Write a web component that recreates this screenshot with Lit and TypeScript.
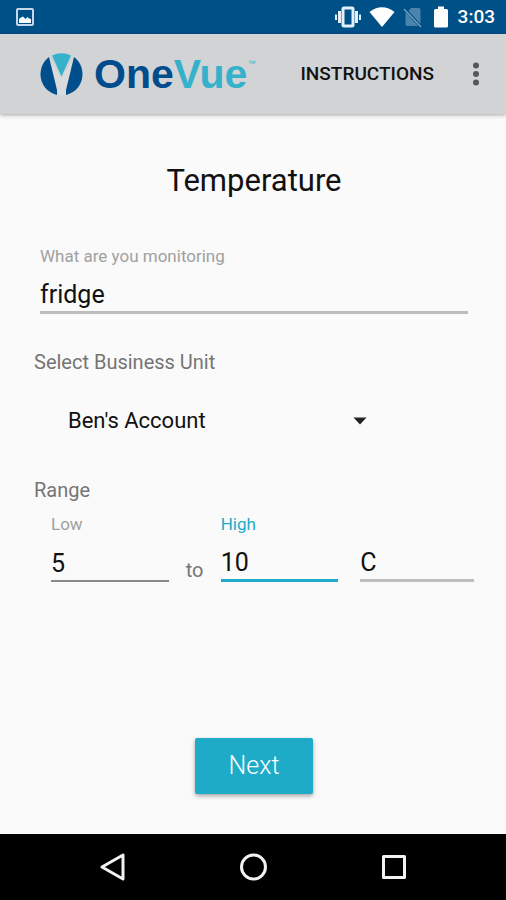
import { LitElement, html, css } from "lit";
import { customElement, state } from "lit/decorators.js";

@customElement("status-bar")
class StatusBar extends LitElement {
  static styles = css`
    :host {
      display: flex;
      align-items: center;
      justify-content: space-between;
      height: 34px;
      padding: 0 11px 0 16px;
      background: #005088;
      color: #fff;
      font: 500 19px/34px Roboto, sans-serif;
    }
    .group {
      display: flex;
      align-items: center;
    }
    svg {
      display: block;
    }
    .wifi {
      margin-left: 7px;
    }
    .sim {
      margin-left: 8px;
    }
    .battery {
      margin-left: 11px;
    }
    .time {
      margin-left: 10px;
    }
  `;
  render() {
    return html`
      <svg width="18" height="18" viewBox="0 0 18 18" role="img" aria-label="Screenshot saved">
        <rect x="1" y="1" width="16" height="16" rx="1" fill="none" stroke="#c5d8ea" stroke-width="2" />
        <path d="M3 15V11L5 9.5 7 8.5 9.5 11 11.5 9 13 10.5 15 11V15Z" fill="#fff" />
      </svg>
      <div class="group">
        <svg width="28" height="22" viewBox="0 0 28 22" role="img" aria-label="Vibrate">
          <g fill="none" stroke="#e4effa">
            <rect x="9" y="2" width="10" height="18" rx="1" stroke-width="3" />
            <path d="M5.5 5V17M22.5 5V17" stroke-width="3" />
            <path d="M2 8.500V14M26 8.500V14" stroke-width="2" />
          </g>
        </svg>
        <svg class="wifi" width="26" height="22" viewBox="0 0 26 22" role="img" aria-label="Wi-Fi">
          <path d="M0.500 6C7.500 -0.300 18.500 -0.300 25.500 6L13 21Z" fill="#fff" />
        </svg>
        <svg class="sim" width="20" height="22" viewBox="0 0 20 22" role="img" aria-label="No SIM">
          <path d="M8 2H16Q17.500 2 17.500 3.500V18L5.500 5Z M2.500 6L15 20H4Q2.500 20 2.500 18.500Z" fill="#4a83ab" />
          <path d="M1 3L18 21" stroke="#6f9dbd" stroke-width="1.500" fill="none" />
        </svg>
        <svg class="battery" width="14" height="22" viewBox="0 0 14 22" role="img" aria-label="Battery full">
          <path d="M4 0.500H10V3H12.500Q14 3 14 4.500V20Q14 21.500 12.500 21.500H1.500Q0 21.500 0 20V4.500Q0 3 1.500 3H4Z" fill="#fff" />
        </svg>
        <span class="time">3:03</span>
      </div>
    `;
  }
}

@customElement("app-header")
class AppHeader extends LitElement {
  static styles = css`
    :host {
      display: flex;
      align-items: center;
      height: 80px;
      padding: 0 18px 0 40px;
      background: #d1d3d5;
      box-shadow: 0 1px 4px rgba(0, 0, 0, 0.35);
    }
    svg {
      display: block;
    }
    .brand {
      display: flex;
      align-items: center;
      gap: 11px;
      font: 700 41px/48px "Liberation Sans", sans-serif;
      color: #004c8c;
    }
    .vue {
      color: #35b1cb;
    }
    .name {
      display: flex;
      align-items: flex-start;
    }
    .tm {
      font-size: 8px;
      line-height: 28px;
      font-weight: 400;
      color: #35b1cb;
    }
    button {
      border: 0;
      padding: 0;
      background: none;
      color: #111;
      cursor: pointer;
    }
    .instructions {
      margin-left: auto;
      font: 500 19px/40px Roboto, sans-serif;
    }
    .more {
      margin-left: 30px;
      padding: 8px 9px;
    }
  `;
  render() {
    return html`
      <div class="brand">
        <svg width="43" height="43" viewBox="0 0 43 43" aria-hidden="true">
          <path d="M9 4L21.500 25L34 4L25.500 42H17.500Z" fill="#d9dbdd" />
          <path d="M9 4C4 7.500 0.500 14 0.500 21.500C0.500 31 7 39.500 17 42V37Z" fill="#004f8c" />
          <path d="M34 4C39 7.500 42.500 14 42.500 21.500C42.500 31 36 39.500 26 42V37Z" fill="#004f8c" />
          <path d="M12 2.500Q21.500 -1.800 31 2.500L21.500 23.500Z" fill="#35b1cb" />
        </svg>
        <span class="name"><span>One<span class="vue">Vue</span></span><span class="tm">™</span></span>
      </div>
      <button class="instructions">INSTRUCTIONS</button>
      <button class="more" aria-label="More options">
        <svg width="6" height="24" viewBox="0 0 6 24" fill="#555759">
          <circle cx="3" cy="3.500" r="3" />
          <circle cx="3" cy="12" r="3" />
          <circle cx="3" cy="20.500" r="3" />
        </svg>
      </button>
    `;
  }
}

@customElement("nav-bar")
class NavBar extends LitElement {
  static styles = css`
    :host {
      display: flex;
      align-items: center;
      justify-content: center;
      gap: 97px;
      height: 66px;
      background: #000;
    }
    button {
      display: flex;
      width: 44px;
      height: 44px;
      align-items: center;
      justify-content: center;
      padding: 0;
      border: 0;
      background: none;
    }
    svg {
      fill: none;
      stroke: #f2f2f2;
      stroke-width: 3;
      stroke-linejoin: round;
    }
  `;
  render() {
    return html`
      <button aria-label="Back">
        <svg width="28" height="28" viewBox="0 0 28 28"><path d="M25 2V26L4 14Z" /></svg>
      </button>
      <button aria-label="Home">
        <svg width="28" height="28" viewBox="0 0 28 28"><circle cx="14.500" cy="14" r="12" /></svg>
      </button>
      <button aria-label="Recent apps">
        <svg width="28" height="28" viewBox="0 0 28 28"><rect x="3.500" y="3.500" width="21" height="21" /></svg>
      </button>
    `;
  }
}

@customElement("app-root")
class AppRoot extends LitElement {
  @state() private item = "fridge";
  @state() private low = "5";
  @state() private high = "10";
  @state() private unit = "C";

  static styles = css`
    :host {
      display: flex;
      flex-direction: column;
      min-height: 100vh;
      background: #fafafa;
      color: #111;
      font-family: Roboto, sans-serif;
    }
    main {
      flex: 1;
      display: flex;
      flex-direction: column;
      padding: 47px 32px 40px 34px;
    }
    h1 {
      margin: 0 0 45px;
      font-size: 31px;
      line-height: 40px;
      font-weight: 400;
      text-align: center;
    }
    .field {
      display: flex;
      flex-direction: column;
    }
    .monitor {
      margin: 0 6px 36px;
    }
    .caption {
      font-size: 17px;
      line-height: 20px;
      color: #a0a0a0;
    }
    .section {
      font-size: 20px;
      line-height: 24px;
      color: #757575;
    }
    input {
      box-sizing: border-box;
      width: 100%;
      min-width: 0;
      height: 48px;
      margin: 0;
      padding: 12px 0 0;
      border: 0;
      border-bottom: 3px solid #bdbdbd;
      border-radius: 0;
      outline: 0;
      background: none;
      color: #111;
      font: 400 25px/30px Roboto, sans-serif;
    }
    .account {
      position: relative;
      display: flex;
      align-items: center;
      width: 80%;
      margin: 23px 0 33px;
    }
    select {
      appearance: none;
      width: 100%;
      height: 48px;
      padding: 0 34px;
      border: 0;
      outline: 0;
      background: none;
      color: #111;
      font: 400 22px/28px Roboto, sans-serif;
    }
    .arrow {
      position: absolute;
      right: 19px;
      pointer-events: none;
    }
    .range {
      display: grid;
      grid-template-columns: 118fr 52px 118fr 22px 114fr;
      align-items: end;
      margin: 12px 0 0 17px;
    }
    .thin {
      border-bottom: 2px solid #8a8a8a;
    }
    .active .caption {
      color: #1eabc8;
    }
    .active input {
      border-color: #1eabc8;
    }
    .to {
      text-align: center;
      color: #757575;
      font-size: 20px;
      line-height: 24px;
    }
    .next {
      align-self: center;
      margin-top: auto;
      width: 118px;
      height: 56px;
      padding: 0;
      border: 0;
      border-radius: 2px;
      background: #1eabc8;
      box-shadow: 0 2px 4px rgba(0, 0, 0, 0.35);
      color: #fff;
      font: 300 25px/32px Roboto, sans-serif;
    }
  `;

  render() {
    return html`
      <status-bar></status-bar>
      <app-header></app-header>
      <main>
        <h1>Temperature</h1>
        <div class="field monitor">
          <label class="caption" for="item">What are you monitoring</label>
          <input id="item" .value=${this.item} />
        </div>
        <label class="section" for="account">Select Business Unit</label>
        <div class="account">
          <select id="account">
            <option>Ben's Account</option>
          </select>
          <svg class="arrow" width="14" height="8" viewBox="0 0 14 8" aria-hidden="true">
            <path d="M0.500 0.500H13.500L7 7.500Z" fill="#222" />
          </svg>
        </div>
        <div class="section">Range</div>
        <div class="range">
          <div class="field">
            <label class="caption" for="low">Low</label>
            <input id="low" class="thin" inputmode="numeric" .value=${this.low} />
          </div>
          <span class="to">to</span>
          <div class="field active">
            <label class="caption" for="high">High</label>
            <input id="high" inputmode="numeric" .value=${this.high} />
          </div>
          <span></span>
          <div class="field">
            <input aria-label="Temperature unit" .value=${this.unit} />
          </div>
        </div>
        <button class="next">Next</button>
      </main>
      <nav-bar></nav-bar>
    `;
  }
}
